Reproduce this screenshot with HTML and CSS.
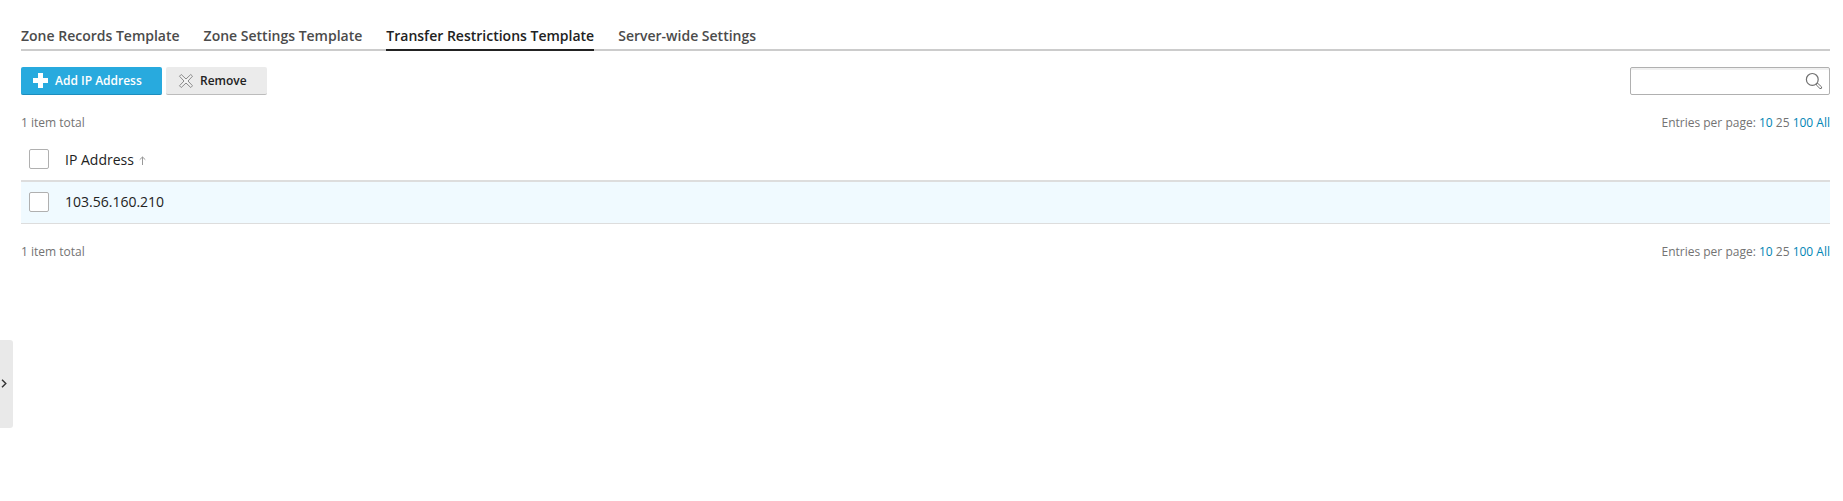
FILE: index.html
```html
<!DOCTYPE html>
<html lang="en">
<head>
<meta charset="utf-8">
<title>Transfer Restrictions Template</title>
<link rel="stylesheet" href="styles.css">
</head>
<body>
<main class="page">
  <nav class="tabs">
    <a class="tab">Zone Records Template</a>
    <a class="tab">Zone Settings Template</a>
    <a class="tab tab-active">Transfer Restrictions Template</a>
    <a class="tab">Server-wide Settings</a>
  </nav>
  <div class="toolbar">
    <button class="btn btn-primary"><svg class="btn-icon" width="16" height="16" viewBox="0 0 16 16"><path d="M6 0h5v5h5v5h-5v5H6v-5H1V5h5z" fill="#fff"/></svg><span>Add IP Address</span></button>
    <button class="btn btn-remove"><svg class="btn-icon" width="16" height="16" viewBox="0 0 16 16"><path d="M4.200 1.500 9 6l4.800-4.500 1.700 1.700L11 8l4.500 4.800-1.700 1.700L9 10l-4.800 4.500-1.700-1.700L7 8 2.500 3.200z" fill="#f4f4f4" stroke="#888" stroke-linejoin="round"/></svg><span>Remove</span></button>
    <div class="search"><svg width="18" height="18" viewBox="0 0 18 18" fill="none" stroke="#707070"><circle cx="7.300" cy="7.400" r="5.900" stroke-width="1.200"/><path d="M11.200 12.800 12.700 11.300 16.600 14.900Q17.200 16.900 15 16.600z" stroke-linejoin="round"/></svg></div>
  </div>
  <div class="paging paging-top"><span class="total">1 item total</span><span class="entries">Entries per page: <a>10</a> 25 <a>100</a> <a>All</a></span></div>
  <div class="list">
    <div class="row head"><span class="check"></span><span class="ip-head">IP Address</span><svg class="sort" width="8" height="9" viewBox="0 0 8 9" fill="none" stroke="#999"><path d="M3.500 9V1M.7 3.700 3.500 1l2.800 2.700"/></svg></div>
    <div class="row item"><span class="check"></span><span class="ip">103.56.160.210</span></div>
  </div>
  <div class="paging paging-bottom"><span class="total">1 item total</span><span class="entries">Entries per page: <a>10</a> 25 <a>100</a> <a>All</a></span></div>
</main>
<div class="handle"><svg width="6" height="9" viewBox="0 0 6 9"><path d="M1 .7 4.800 4.500 1 8.300" fill="none" stroke="#333" stroke-width="1.400"/></svg></div>
</body>
</html>
```
FILE: styles.css
```css
* { box-sizing: border-box; }
body {
  margin: 0;
  height: 501px;
  overflow: hidden;
  background: #fff;
  color: #222;
  font: 14px/20px "Open Sans", sans-serif;
}
.page { padding: 25px 13px 0 21px; }
.tabs {
  display: flex;
  gap: 24px;
  height: 26px;
  border-bottom: 2px solid #ccc;
}
.tab {
  height: 26px;
  line-height: 22px;
  font-weight: 600;
  color: #4b4b4b;
  white-space: nowrap;
}
.tab-active { color: #222; border-bottom: 2px solid #222; }
.toolbar {
  display: flex;
  gap: 4px;
  margin-top: 16px;
  height: 28px;
}
.btn {
  display: flex;
  align-items: center;
  height: 28px;
  margin: 0;
  padding: 1px 0 0 11px;
  border: 0;
  border-bottom: 1px solid #bcbcbc;
  border-radius: 2px;
  background: #ebebeb;
  color: #222;
  font: 600 12px/18px "Open Sans", sans-serif;
  white-space: nowrap;
}
.btn-icon { flex: none; margin-right: 7px; }
.btn-primary {
  width: 141px;
  background: #28aade;
  border-bottom-color: #1c8dbd;
  color: #fff;
}
.btn-remove { width: 101px; }
.search {
  display: flex;
  align-items: center;
  justify-content: flex-end;
  width: 200px;
  height: 28px;
  margin-left: auto;
  padding-right: 6px;
  border: 1px solid #b0b0b0;
  border-radius: 2px;
  box-shadow: inset 0 2px 0 #f0f0f0;
}
.paging {
  display: flex;
  justify-content: space-between;
  font-size: 12px;
  line-height: 18px;
  color: #737373;
}
.paging-top { margin-top: 19px; }
.paging-bottom { margin-top: 19px; }
.paging a { color: #0085b5; }
.list { margin-top: 8px; }
.row { display: flex; align-items: center; padding-left: 8px; }
.head { height: 42px; border-bottom: 2px solid #ddd; }
.head .check { margin-bottom: 2px; }
.item { height: 42px; padding-bottom: 1px; background: #f0faff; border-bottom: 1px solid #ddd; }
.check {
  width: 20px;
  height: 20px;
  margin-right: 16px;
  border: 1px solid #b0b0b0;
  border-radius: 2px;
  background: #fff;
}
.sort { margin: 1px 0 0 5px; }
.handle {
  position: absolute;
  left: 0;
  top: 340px;
  display: flex;
  align-items: center;
  width: 13px;
  height: 88px;
  padding: 0 0 1px 1px;
  border-radius: 0 3px 3px 0;
  background: #e9e9e9;
}
```
